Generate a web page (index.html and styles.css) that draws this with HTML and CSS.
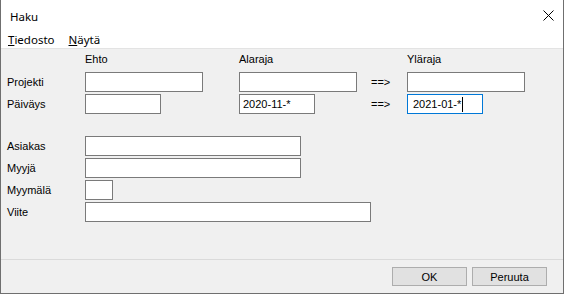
FILE: index.html
```html
<!DOCTYPE html>
<html>
<head>
    <meta charset="UTF-8">
    <title>Haku</title>
    <link rel="stylesheet" href="styles.css">
</head>
<body>
    <div class="window">
        <div class="titlebar">
            <span class="title">Haku</span>
            <svg class="close" width="11" height="11" viewBox="0 0 11 11">
                <path d="M0.5 0.5 L10.5 10.5 M10.5 0.5 L0.5 10.5" stroke="#000" stroke-width="1" fill="none"/>
            </svg>
        </div>
        <div class="menubar">
            <span class="menu"><u>T</u>iedosto</span>
            <span class="menu"><u>N</u>äytä</span>
        </div>
        <div class="content">
            <div class="row head">
                <span class="lbl"></span>
                <span class="c1">Ehto</span>
                <span class="c2">Alaraja</span>
                <span class="arrow"></span>
                <span class="c3">Yläraja</span>
            </div>
            <div class="row">
                <label class="lbl">Projekti</label>
                <span class="c1"><input class="field w-long" type="text"></span>
                <span class="c2"><input class="field w-long" type="text"></span>
                <span class="arrow">==&gt;</span>
                <span class="c3"><input class="field w-long" type="text"></span>
            </div>
            <div class="row">
                <label class="lbl">Päiväys</label>
                <span class="c1"><input class="field w-short" type="text"></span>
                <span class="c2"><input class="field w-short" type="text" value="2020-11-*"></span>
                <span class="arrow">==&gt;</span>
                <span class="c3"><div class="field w-short focus">2021-01-*<span class="caret"></span></div></span>
            </div>

            <div class="group">
                <div class="row">
                    <label class="lbl">Asiakas</label>
                    <input class="field w-216" type="text">
                </div>
                <div class="row">
                    <label class="lbl">Myyjä</label>
                    <input class="field w-216" type="text">
                </div>
                <div class="row">
                    <label class="lbl">Myymälä</label>
                    <input class="field w-28" type="text">
                </div>
                <div class="row">
                    <label class="lbl">Viite</label>
                    <input class="field w-286" type="text">
                </div>
            </div>
        </div>
        <div class="footer">
            <button class="btn">OK</button>
            <button class="btn">Peruuta</button>
        </div>
    </div>
</body>
</html>
```

FILE: styles.css
```css
body {
    margin: 0;
    font-family: 'Liberation Sans', Arial, sans-serif;
    font-size: 11px;
    color: #000;
}

.window {
    width: 564px;
    height: 294px;
    box-sizing: border-box;
    border: 1px solid #6f6f6f;
    border-top: none;
    background-color: #f0f0f0;
    display: flex;
    flex-direction: column;
}

.titlebar {
    height: 30px;
    background-color: #fff;
    display: flex;
    align-items: center;
    justify-content: space-between;
    padding-left: 9px;
    padding-right: 9px;
}

.title {
    font-family: 'Noto Sans', sans-serif;
    font-size: 11.5px;
    padding-top: 2px;
}

.close {
    display: block;
    margin-top: 1px;
}

.menubar {
    height: 18px;
    background-color: #fff;
    border-bottom: 1px solid #e3e3e3;
    display: flex;
    align-items: center;
    font-family: 'Noto Sans', sans-serif;
    font-size: 11.5px;
}

.menu {
    padding: 0 7px;
}

.content {
    flex: 1;
    padding: 3px 0 0 6px;
}

.row {
    display: flex;
    align-items: center;
    height: 20px;
    margin-bottom: 2px;
}

.row.head {
    height: 14px;
    margin-bottom: 6px;
}

.lbl {
    width: 78px;
}

.c1 {
    width: 154px;
}

.c2 {
    width: 132px;
}

.arrow {
    width: 36px;
}

.c3 {
    flex: 1;
}

.group {
    margin-top: 22px;
}

.field {
    display: block;
    box-sizing: border-box;
    height: 20px;
    margin: 0;
    padding: 0 3px;
    border: 1px solid #7a7a7a;
    background-color: #fff;
    font-family: 'Liberation Sans', Arial, sans-serif;
    font-size: 11px;
    color: #000;
    outline: none;
}

.field.focus {
    border-color: #0078d7;
    display: flex;
    align-items: center;
    padding-left: 5px;
}

.caret {
    display: inline-block;
    width: 1px;
    height: 15px;
    background-color: #000;
    margin-left: 1px;
}

.w-long {
    width: 118px;
}

.w-short {
    width: 76px;
}

.w-216 {
    width: 216px;
}

.w-28 {
    width: 28px;
}

.w-286 {
    width: 286px;
}

.footer {
    height: 34px;
    border-top: 1px solid #dadada;
    display: flex;
    justify-content: flex-end;
    align-items: flex-start;
    gap: 5px;
    padding: 7px 16px 0 0;
    box-sizing: border-box;
}

.btn {
    width: 75px;
    height: 19px;
    padding: 0;
    background-color: #e1e1e1;
    border: 1px solid #adadad;
    font-family: 'Liberation Sans', Arial, sans-serif;
    font-size: 11px;
    color: #000;
}
```
